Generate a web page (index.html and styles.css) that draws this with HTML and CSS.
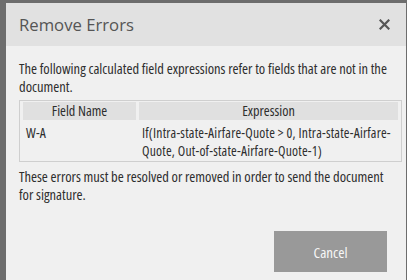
FILE: index.html
```html
<!DOCTYPE html>
<html>
<head>
<meta charset="utf-8">
<link rel="stylesheet" href="styles.css">
</head>
<body>
<div class="dialog">
  <div class="header">
    <h1 class="title">Remove Errors</h1>
    <span class="close" aria-label="Close">
      <svg width="11" height="11" viewBox="0 0 11 11"><path d="M1.5 1.5 L9.5 9.5 M9.5 1.5 L1.5 9.5" stroke="#555" stroke-width="2.2" stroke-linecap="square"/></svg>
    </span>
  </div>
  <div class="body">
    <p class="text">The following calculated field expressions refer to fields that are not in the document.</p>
    <table class="errors">
      <colgroup><col class="col-name"><col class="col-expr"></colgroup>
      <thead>
        <tr><th>Field Name</th><th>Expression</th></tr>
      </thead>
      <tbody>
        <tr><td>W-A</td><td>If(Intra-state-Airfare-Quote &gt; 0, Intra-state-Airfare-Quote, Out-of-state-Airfare-Quote-1)</td></tr>
      </tbody>
    </table>
    <p class="text">These errors must be resolved or removed in order to send the document<br>for signature.</p>
    <div class="actions">
      <button class="btn">Cancel</button>
    </div>
  </div>
</div>
</body>
</html>
```
FILE: styles.css
```css
html, body {
  margin: 0;
  padding: 0;
  background: #6d6d6d;
  height: 280px;
  overflow: hidden;
}
body {
  padding: 3px 1px 0 6px;
  box-sizing: border-box;
  font-family: "Open Sans", "Liberation Sans", sans-serif;
  font-stretch: 75%;
  color: #2e2e2e;
}
.dialog {
  background: #f0f0f0;
  height: 277px;
  display: flex;
  flex-direction: column;
}
.header {
  flex-shrink: 0;
  background: #e1e1e1;
  height: 43px;
  display: flex;
  align-items: center;
  justify-content: space-between;
  padding: 0 16px 0 13px;
}
.title {
  margin: 0;
  font-weight: normal;
  font-stretch: 100%;
  font-size: 16.7px;
  line-height: 24px;
  color: #555;
}
.close {
  display: flex;
  width: 11px;
  height: 11px;
}
.body {
  padding: 14px 4px 0 13px;
  font-size: 14.5px;
  line-height: 18px;
}
.text {
  margin: 0;
}
.errors {
  margin: 4px 0 6px;
  width: 100%;
  table-layout: fixed;
  border: 1px solid #cfcfcf;
  border-spacing: 3px 1px;
  font-size: 13.7px;
}
.errors .col-name { width: 113px; }
.errors th {
  background: #e0e0e0;
  font-weight: normal;
  font-size: 14.2px;
  text-align: center;
  padding: 0;
  height: 18px;
  line-height: 18px;
}
.errors td {
  vertical-align: top;
  padding: 3px 0 0 3px;
  line-height: 18px;
  letter-spacing: 0.2px;
  text-align: left;
}
.actions {
  display: flex;
  justify-content: flex-end;
  padding: 27px 15px 0 0;
}
.btn {
  width: 113px;
  height: 41px;
  background: #999;
  border: none;
  color: #f7f7f7;
  font-family: inherit;
  font-stretch: 75%;
  font-size: 15px;
  padding: 0;
}
```
